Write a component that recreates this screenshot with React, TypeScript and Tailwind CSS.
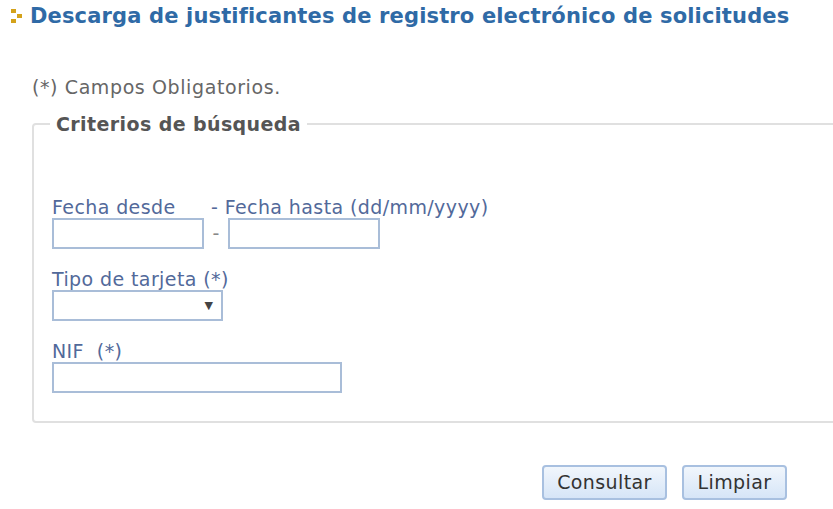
import React from 'react';

const font = { fontFamily: '"DejaVu Sans", Verdana, sans-serif' };

function Bullet() {
  return (
    <svg width="11" height="14" viewBox="0 0 11 14" className="shrink-0">
      <rect x="0" y="0" width="5" height="4" fill="#d4a21a" />
      <rect x="6" y="5" width="5" height="4" fill="#d4a21a" />
      <rect x="0" y="10" width="5" height="4" fill="#d4a21a" />
    </svg>
  );
}

function Field({ label, children }: { label: React.ReactNode; children: React.ReactNode }) {
  return (
    <div className="flex flex-col">
      <label className="text-[19px] leading-[22px] tracking-[0.4px] text-[#52699a] whitespace-pre">{label}</label>
      {children}
    </div>
  );
}

const inputCls = 'h-[31px] border-2 border-[#a9bdd8] bg-white';
const btnCls =
  'h-[35px] rounded-[4px] border-2 border-[#a8c0e0] bg-gradient-to-b from-[#f1f6fc] to-[#d6e5f7] text-[19px] tracking-[0.4px] text-[#333]';

export default function App() {
  return (
    <div className="w-[833px] h-[509px] bg-white overflow-hidden" style={font}>
      <h1 className="flex items-center gap-[8px] pl-[11px] pt-[3px] text-[21px] font-bold leading-[26px] tracking-[0.15px] text-[#2f6aa6]">
        <Bullet />
        <span>Descarga de justificantes de registro electrónico de solicitudes</span>
      </h1>

      <p className="mt-[47px] pl-[32px] text-[19px] leading-[22px] tracking-[0.6px] text-[#666]">(*) Campos Obligatorios.</p>

      <fieldset className="mt-[16px] ml-[32px] mr-[-10px] h-[309px] rounded-[4px] border-2 border-[#e0e0e0] pl-[18px]">
        <legend className="ml-[-2px] px-[6px] text-[19px] font-bold leading-[20px] tracking-[0.4px] text-[#555]">
          Criterios de búsqueda
        </legend>

        <div className="mt-[62px] flex flex-col gap-[19px]">
          <div className="flex flex-col">
            <div className="flex text-[19px] leading-[22px] tracking-[0.4px] text-[#52699a]">
              <span className="w-[159px]">Fecha desde</span>
              <span>- Fecha hasta (dd/mm/yyyy)</span>
            </div>
            <div className="flex items-center">
              <input className={`${inputCls} w-[152px]`} />
              <span className="w-[24px] text-center text-[19px] text-[#888]">-</span>
              <input className={`${inputCls} w-[152px]`} />
            </div>
          </div>

          <Field label="Tipo de tarjeta (*)">
            <div className={`${inputCls} relative w-[171px]`}>
              <span className="absolute right-[8px] top-[8px] text-[11px] leading-[11px] text-[#444]">▼</span>
            </div>
          </Field>

          <Field label="NIF  (*)">
            <input className={`${inputCls} w-[290px]`} />
          </Field>
        </div>
      </fieldset>

      <div className="mt-[42px] flex justify-end gap-[15px] pr-[46px]">
        <button className={`${btnCls} w-[125px]`}>Consultar</button>
        <button className={`${btnCls} w-[105px]`}>Limpiar</button>
      </div>
    </div>
  );
}
